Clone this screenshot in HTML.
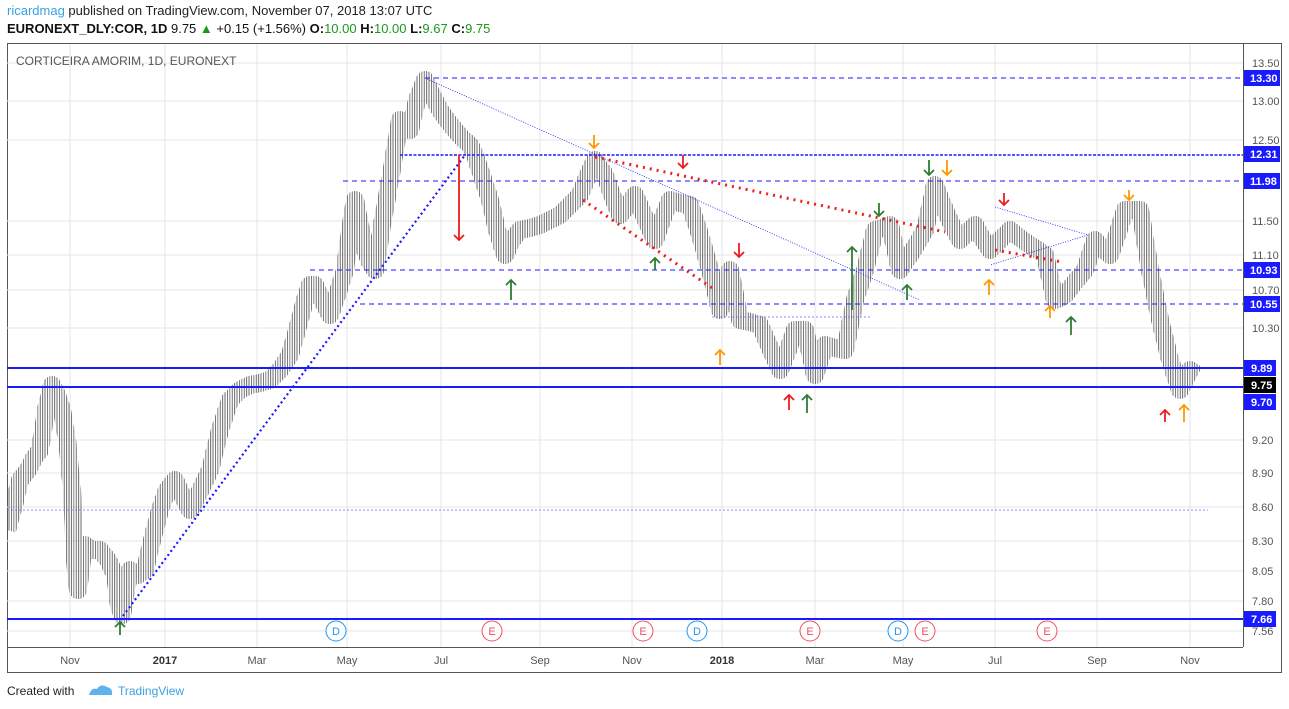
<!DOCTYPE html>
<html><head><meta charset="utf-8"><style>
body{margin:0;width:1289px;height:709px;background:#fff;font-family:"Liberation Sans",sans-serif;overflow:hidden;position:relative}
.t{position:absolute;white-space:nowrap}
</style></head><body>
<div class="t" style="left:7px;top:3px;font-size:13px;color:#222"><span style="color:#3aa0e0">ricardmag</span> published on TradingView.com, November 07, 2018 13:07 UTC</div>
<div class="t" style="left:7px;top:21px;font-size:13px;color:#111"><b>EURONEXT_DLY:COR, 1D</b> 9.75 <span style="color:#1a9a1a">▲</span> +0.15 (+1.56%) <b>O:</b><span style="color:#1a9a1a">10.00</span> <b>H:</b><span style="color:#1a9a1a">10.00</span> <b>L:</b><span style="color:#1a9a1a">9.67</span> <b>C:</b><span style="color:#1a9a1a">9.75</span></div>
<svg width="1289" height="709" style="position:absolute;left:0;top:0" font-family="Liberation Sans, sans-serif">
<defs>
<pattern id="bars" patternUnits="userSpaceOnUse" x="0" y="0" width="2.4" height="10"><rect x="0" y="0" width="1.9" height="10" fill="#000"/></pattern>
<pattern id="wicks" patternUnits="userSpaceOnUse" x="1" y="0" width="2.4" height="10"><rect x="0.5" y="0" width="0.6" height="10" fill="#555"/></pattern>
<clipPath id="cl"><rect x="8" y="44" width="1235" height="603"/></clipPath>
</defs>
<rect x="7.5" y="43.5" width="1274" height="629" fill="none" stroke="#555"/>
<line x1="1243.5" y1="44" x2="1243.5" y2="647" stroke="#555"/>
<line x1="7" y1="647.5" x2="1243" y2="647.5" stroke="#555"/>
<g stroke="#e6e6e6">
<line x1="70" y1="44" x2="70" y2="647"/><line x1="165" y1="44" x2="165" y2="647"/><line x1="257" y1="44" x2="257" y2="647"/><line x1="347" y1="44" x2="347" y2="647"/><line x1="441" y1="44" x2="441" y2="647"/><line x1="540" y1="44" x2="540" y2="647"/><line x1="632" y1="44" x2="632" y2="647"/><line x1="722" y1="44" x2="722" y2="647"/><line x1="815" y1="44" x2="815" y2="647"/><line x1="903" y1="44" x2="903" y2="647"/><line x1="995" y1="44" x2="995" y2="647"/><line x1="1097" y1="44" x2="1097" y2="647"/><line x1="1190" y1="44" x2="1190" y2="647"/>
<line x1="7" y1="63" x2="1243" y2="63"/><line x1="7" y1="101" x2="1243" y2="101"/><line x1="7" y1="140" x2="1243" y2="140"/><line x1="7" y1="221" x2="1243" y2="221"/><line x1="7" y1="255" x2="1243" y2="255"/><line x1="7" y1="290" x2="1243" y2="290"/><line x1="7" y1="328" x2="1243" y2="328"/><line x1="7" y1="440" x2="1243" y2="440"/><line x1="7" y1="473" x2="1243" y2="473"/><line x1="7" y1="507" x2="1243" y2="507"/><line x1="7" y1="541" x2="1243" y2="541"/><line x1="7" y1="571" x2="1243" y2="571"/><line x1="7" y1="601" x2="1243" y2="601"/><line x1="7" y1="631" x2="1243" y2="631"/>
</g>
<text x="16" y="65" font-size="12" fill="#555">CORTICEIRA AMORIM, 1D, EURONEXT</text>
<g font-size="11" fill="#555" text-anchor="middle">
<text x="70" y="664">Nov</text><text x="165" y="664" font-weight="bold" fill="#333">2017</text><text x="257" y="664">Mar</text><text x="347" y="664">May</text><text x="441" y="664">Jul</text><text x="540" y="664">Sep</text><text x="632" y="664">Nov</text><text x="722" y="664" font-weight="bold" fill="#333">2018</text><text x="815" y="664">Mar</text><text x="903" y="664">May</text><text x="995" y="664">Jul</text><text x="1097" y="664">Sep</text><text x="1190" y="664">Nov</text>
</g>
<g font-size="11" fill="#555">
<text x="1252" y="67">13.50</text><text x="1252" y="105">13.00</text><text x="1252" y="144">12.50</text><text x="1252" y="225">11.50</text><text x="1252" y="259">11.10</text><text x="1252" y="294">10.70</text><text x="1252" y="332">10.30</text><text x="1252" y="444">9.20</text><text x="1252" y="477">8.90</text><text x="1252" y="511">8.60</text><text x="1252" y="545">8.30</text><text x="1252" y="575">8.05</text><text x="1252" y="605">7.80</text><text x="1252" y="635">7.56</text>
</g>
<g fill="none" stroke-linejoin="round" stroke-linecap="butt" clip-path="url(#cl)">
<polyline id="p" stroke="url(#wicks)" stroke-width="18" points="7,530 14,505 20,480 28,470 34,458 40,450 46,410 52,385 57,395 62,410 67,440 72,490 75,560 78,590 82,560 85,545 92,550 100,550 108,560 115,575 119,605 122,615 126,590 130,570 138,575 145,570 152,540 160,510 167,490 175,480 182,495 190,510 198,495 210,470 220,430 230,400 240,390 250,385 260,383 270,380 280,370 290,355 297,330 305,300 310,285 315,285 322,300 330,315 337,295 345,270 350,230 355,200 360,225 365,250 370,262 375,270 382,225 390,180 395,150 400,120 405,125 410,130 417,100 425,80 432,95 440,110 447,120 455,130 462,138 470,145 475,155 480,170 485,185 490,200 497,230 505,255 512,240 520,230 530,228 540,225 550,220 560,215 570,205 580,195 588,175 595,160 600,168 605,175 612,195 620,215 628,205 635,195 645,218 655,240 662,220 670,200 680,203 690,205 695,220 700,235 705,252 710,270 715,290 720,310 725,290 730,270 735,295 740,320 750,322 760,325 770,348 780,370 788,350 795,330 800,330 805,330 810,352 815,375 820,360 825,345 835,348 845,350 850,325 855,300 860,285 865,270 870,250 875,230 882,228 890,225 895,248 900,270 905,262 910,255 918,242 925,230 930,208 935,185 940,198 945,210 952,225 960,240 968,232 975,225 982,238 990,250 1000,240 1010,230 1020,238 1030,245 1038,250 1045,255 1050,278 1055,300 1060,298 1065,295 1075,282 1085,270 1090,255 1095,240 1102,248 1110,255 1118,232 1125,210 1132,210 1140,210 1145,240 1150,270 1155,295 1160,320 1165,340 1170,360 1175,375 1180,390 1185,380 1190,370 1197,375"/>
<use href="#p" stroke="url(#bars)" stroke-width="8"/>
</g>
<g fill="none" stroke="#1a1aff">
<line x1="425" y1="78" x2="1243" y2="78" stroke-dasharray="5,4"/>
<line x1="400" y1="155" x2="1243" y2="155" stroke-dasharray="3,1.5" stroke-width="1.6"/>
<line x1="343" y1="181" x2="1243" y2="181" stroke-dasharray="5,4"/>
<line x1="310" y1="270" x2="1243" y2="270" stroke-dasharray="5,4"/>
<line x1="360" y1="304" x2="1243" y2="304" stroke-dasharray="5,4"/>
<line x1="7" y1="368" x2="1243" y2="368" stroke-width="2"/>
<line x1="7" y1="387" x2="1243" y2="387" stroke-width="2"/>
<line x1="7" y1="619" x2="1243" y2="619" stroke-width="2"/>
<line x1="7" y1="510" x2="1208" y2="510" stroke-dasharray="2,2" stroke-width="0.8" stroke="#6a6aff"/>
<line x1="712" y1="317" x2="870" y2="317" stroke-dasharray="2,2" stroke-width="0.8" stroke="#6a6aff"/>
<line x1="120" y1="620" x2="465" y2="155" stroke-dasharray="2,3" stroke-width="2.2"/>
<line x1="425" y1="78" x2="920" y2="300" stroke-dasharray="1,1.5" stroke-width="0.8"/>
<polyline points="995,207 1088,235 990,265" stroke-dasharray="1,1.5" stroke-width="0.8"/>
</g>
<g stroke="#ee1c1c" stroke-width="3" stroke-dasharray="2,5" fill="none">
<line x1="595" y1="157" x2="945" y2="232"/>
<line x1="583" y1="200" x2="715" y2="290"/>
<line x1="995" y1="250" x2="1062" y2="262"/>
</g>
<g fill="none" stroke-width="1.8">
<g stroke="#2e7d32">
<path d="M120 635V622M115 627L120 622L125 627"/>
<path d="M511 300V280M506 285L511 280L516 285"/>
<path d="M655 270V258M650 263L655 258L660 263"/>
<path d="M807 413V395M802 400L807 395L812 400"/>
<path d="M852 310V247M847 252L852 247L857 252"/>
<path d="M907 300V285M902 290L907 285L912 290"/>
<path d="M1071 335V317M1066 322L1071 317L1076 322"/>
<path d="M879 203V216M874 211L879 216L884 211"/>
<path d="M929 160V175M924 170L929 175L934 170"/>
</g>
<g stroke="#ff9800">
<path d="M594 135V148M589 143L594 148L599 143"/>
<path d="M947 160V175M942 170L947 175L952 170"/>
<path d="M1129 190V200M1124 195L1129 200L1134 195"/>
<path d="M720 365V350M715 355L720 350L725 355"/>
<path d="M989 295V280M984 285L989 280L994 285"/>
<path d="M1050 318V306M1045 311L1050 306L1055 311"/>
<path d="M1184 422V405M1179 410L1184 405L1189 410"/>
</g>
<g stroke="#ee1c1c">
<path d="M459 155V240M454 235L459 240L464 235"/>
<path d="M683 155V168M678 163L683 168L688 163"/>
<path d="M739 243V257M734 252L739 257L744 252"/>
<path d="M1004 193V205M999 200L1004 205L1009 200"/>
<path d="M789 410V395M784 400L789 395L794 400"/>
<path d="M1165 422V410M1160 415L1165 410L1170 415"/>
</g>
</g>
<g font-size="11" text-anchor="middle">
<g fill="#fff" stroke="#2196f3"><circle cx="336" cy="631" r="10"/><circle cx="697" cy="631" r="10"/><circle cx="898" cy="631" r="10"/></g>
<g fill="#fff" stroke="#f05060"><circle cx="492" cy="631" r="10"/><circle cx="643" cy="631" r="10"/><circle cx="810" cy="631" r="10"/><circle cx="925" cy="631" r="10"/><circle cx="1047" cy="631" r="10"/></g>
<g fill="#2196f3"><text x="336" y="635">D</text><text x="697" y="635">D</text><text x="898" y="635">D</text></g>
<g fill="#f05060"><text x="492" y="635">E</text><text x="643" y="635">E</text><text x="810" y="635">E</text><text x="925" y="635">E</text><text x="1047" y="635">E</text></g>
</g>
<g font-size="11" font-weight="bold" fill="#fff">
<rect x="1244" y="70" width="36" height="16" fill="#1a1aff"/><text x="1250" y="82">13.30</text>
<rect x="1244" y="146" width="36" height="16" fill="#1a1aff"/><text x="1250" y="158">12.31</text>
<rect x="1244" y="173" width="36" height="16" fill="#1a1aff"/><text x="1250" y="185">11.98</text>
<rect x="1244" y="262" width="36" height="16" fill="#1a1aff"/><text x="1250" y="274">10.93</text>
<rect x="1244" y="296" width="36" height="16" fill="#1a1aff"/><text x="1250" y="308">10.55</text>
<rect x="1244" y="360" width="32" height="16" fill="#1a1aff"/><text x="1251" y="372">9.89</text>
<rect x="1244" y="377" width="32" height="16" fill="#000"/><text x="1251" y="389">9.75</text>
<rect x="1244" y="394" width="32" height="16" fill="#1a1aff"/><text x="1251" y="406">9.70</text>
<rect x="1244" y="611" width="32" height="16" fill="#1a1aff"/><text x="1251" y="623">7.66</text>
</g>
</svg>
<div class="t" style="left:7px;top:684px;font-size:12px;color:#222">Created with</div>
<svg style="position:absolute;left:88px;top:683px" width="26" height="14"><path d="M1 12 Q3 4 9 6 Q13 0 19 4 Q25 5 24 12 Z" fill="#5fb3ea"/></svg>
<div class="t" style="left:118px;top:684px;font-size:12px;color:#3aa0e0">TradingView</div>
</body></html>
